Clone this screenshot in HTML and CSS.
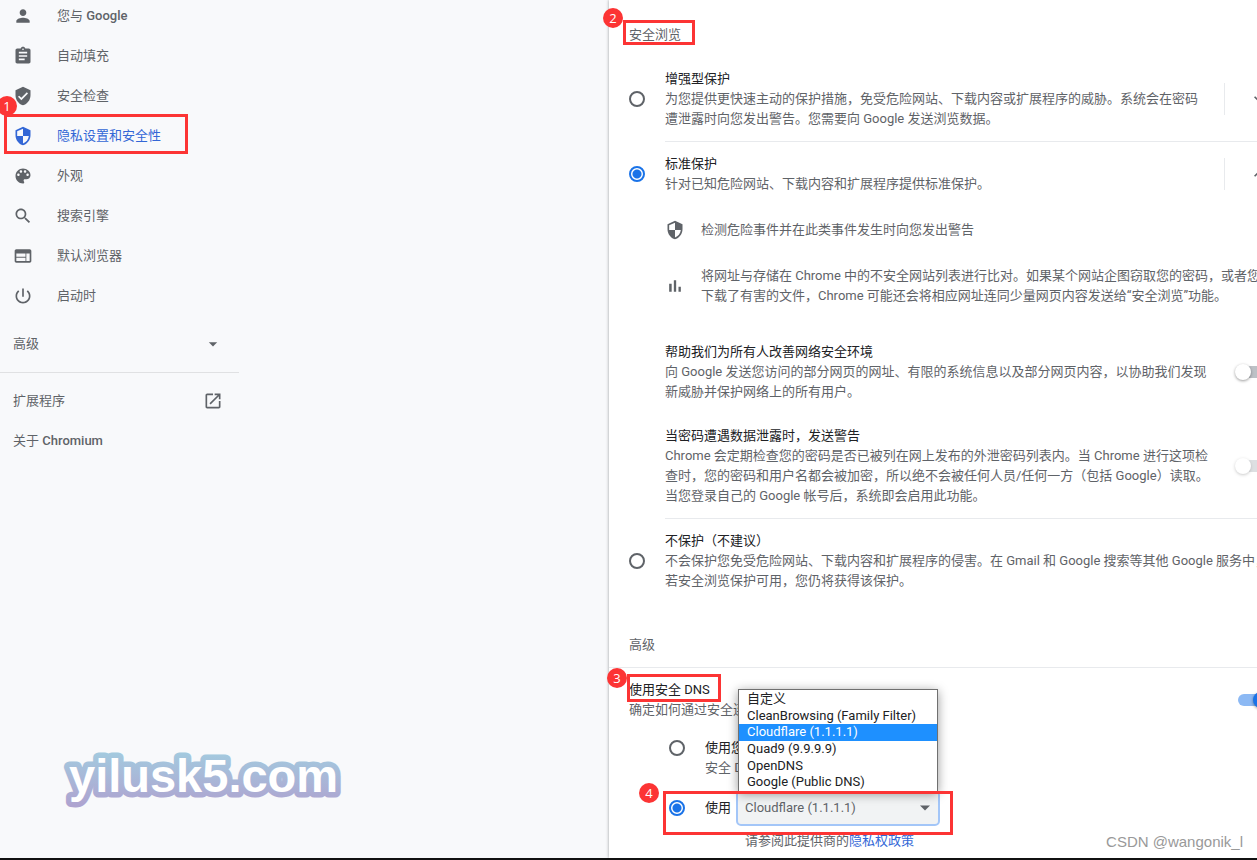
FILE: index.html
```html
<!DOCTYPE html>
<html lang="zh-CN">
<head>
    <meta charset="UTF-8">
    <meta name="viewport" content="width=device-width, initial-scale=1.0">
    <title>设置 - 隐私设置和安全性</title>
    <link rel="stylesheet" href="styles.css">
</head>
<body>
    <div class="page">
        <nav class="sidebar">
            <div class="menu">
                <a class="menu-item" href="#people">
                    <svg class="icon" viewBox="0 0 24 24"><path d="M12 12c2.21 0 4-1.79 4-4s-1.79-4-4-4-4 1.790-4 4 1.790 4 4 4zm0 2c-2.670 0-8 1.340-8 4v2h16v-2c0-2.660-5.330-4-8-4z"/></svg>
                    <span>您与 <b>Google</b></span>
                </a>
                <a class="menu-item" href="#autofill">
                    <svg class="icon" viewBox="0 0 24 24"><path d="M19 3h-4.180C14.400 1.840 13.300 1 12 1s-2.400.840-2.820 2H5c-1.100 0-2 .9-2 2v14c0 1.100.9 2 2 2h14c1.100 0 2-.9 2-2V5c0-1.100-.9-2-2-2zm-7 0c.55 0 1 .45 1 1s-.45 1-1 1-1-.45-1-1 .45-1 1-1zm2 14H7v-2h7v2zm3-4H7v-2h10v2zm0-4H7V7h10v2z"/></svg>
                    <span>自动填充</span>
                </a>
                <a class="menu-item" href="#safety">
                    <svg class="icon" viewBox="0 0 24 24"><path d="M12 1L3 5v6c0 5.550 3.840 10.740 9 12 5.160-1.260 9-6.450 9-12V5l-9-4zm-2 16l-4-4 1.410-1.410L10 14.170l6.590-6.590L18 9l-8 8z"/></svg>
                    <span>安全检查</span>
                </a>
                <a class="menu-item active" href="#privacy">
                    <svg class="icon" viewBox="0 0 24 24"><path d="M12 1L3 5v6c0 5.550 3.840 10.740 9 12 5.160-1.260 9-6.450 9-12V5l-9-4zm0 10.990h7c-.53 4.120-3.280 7.790-7 8.940V12H5V6.300l7-3.110v8.800z"/></svg>
                    <span>隐私设置和安全性</span>
                </a>
                <a class="menu-item" href="#appearance">
                    <svg class="icon" viewBox="0 0 24 24"><path d="M12 3c-4.970 0-9 4.030-9 9s4.030 9 9 9c.83 0 1.500-.67 1.500-1.500 0-.39-.15-.74-.39-1.010-.23-.26-.38-.61-.38-.99 0-.83.67-1.500 1.500-1.500H16c2.760 0 5-2.240 5-5 0-4.420-4.030-8-9-8zm-5.500 9c-.83 0-1.500-.67-1.500-1.500S5.670 9 6.500 9 8 9.670 8 10.500 7.330 12 6.500 12zm3-4C8.670 8 8 7.330 8 6.500S8.670 5 9.500 5s1.500.67 1.500 1.500S10.330 8 9.500 8zm5 0c-.83 0-1.500-.67-1.500-1.500S13.670 5 14.500 5s1.500.67 1.500 1.500S15.330 8 14.500 8zm3 4c-.83 0-1.500-.67-1.500-1.500S16.670 9 17.500 9s1.500.67 1.500 1.500-.67 1.500-1.500 1.500z"/></svg>
                    <span>外观</span>
                </a>
                <a class="menu-item" href="#search">
                    <svg class="icon" viewBox="0 0 24 24"><path d="M15.500 14h-.79l-.28-.27C15.410 12.590 16 11.110 16 9.500 16 5.910 13.090 3 9.500 3S3 5.910 3 9.500 5.910 16 9.500 16c1.610 0 3.090-.59 4.230-1.570l.27.28v.79l5 4.990L20.490 19l-4.990-5zm-6 0C7.010 14 5 11.990 5 9.500S7.010 5 9.500 5 14 7.010 14 9.500 11.990 14 9.500 14z"/></svg>
                    <span>搜索引擎</span>
                </a>
                <a class="menu-item" href="#browser">
                    <svg class="icon" viewBox="0 0 24 24"><path d="M20 4H4c-1.100 0-1.990.9-1.990 2L2 18c0 1.100.9 2 2 2h16c1.100 0 2-.9 2-2V6c0-1.100-.9-2-2-2zm-5 14H4v-4h11v4zm0-5H4V9h11v4zm5 5h-4V9h4v9z"/></svg>
                    <span>默认浏览器</span>
                </a>
                <a class="menu-item" href="#startup">
                    <svg class="icon" viewBox="0 0 24 24"><path d="M13 3h-2v10h2V3zm4.830 2.170l-1.420 1.420C17.990 7.860 19 9.810 19 12c0 3.870-3.130 7-7 7s-7-3.130-7-7c0-2.190 1.010-4.140 2.580-5.420L6.170 5.170C4.230 6.820 3 9.260 3 12c0 4.970 4.030 9 9 9s9-4.030 9-9c0-2.740-1.230-5.180-3.170-6.830z"/></svg>
                    <span>启动时</span>
                </a>
            </div>
            <button class="menu-row" type="button">
                <span>高级</span>
                <svg class="icon" viewBox="0 0 24 24"><path d="M7 10l5 5 5-5z"/></svg>
            </button>
            <div class="menu-footer">
                <a class="menu-row" href="#extensions">
                    <span>扩展程序</span>
                    <svg class="icon" viewBox="0 0 24 24"><path d="M19 19H5V5h7V3H5c-1.110 0-2 .9-2 2v14c0 1.100.89 2 2 2h14c1.100 0 2-.9 2-2v-7h-2v7zM14 3v2h3.590l-9.830 9.830 1.410 1.410L19 6.410V10h2V3h-7z"/></svg>
                </a>
                <a class="menu-row" href="#about"><span>关于 <b>Chromium</b></span></a>
            </div>
        </nav>

        <main class="card">
            <div class="card-inner">
                <h2 class="section-title">安全浏览</h2>

                <div class="option">
                    <input class="radio" type="radio" name="protection" id="enhanced">
                    <div class="option-body">
                        <div class="text">
                            <label for="enhanced">增强型保护</label>
                            <p>为您提供更快速主动的保护措施，免受危险网站、下载内容或扩展程序的威胁。系统会在密码<br>遭泄露时向您发出警告。您需要向 Google 发送浏览数据。</p>
                        </div>
                        <button class="expand" type="button" aria-label="展开">
                            <svg class="icon" viewBox="0 0 24 24"><path d="M16.590 8.590L12 13.170 7.410 8.590 6 10l6 6 6-6z"/></svg>
                        </button>
                    </div>
                </div>

                <div class="option">
                    <input class="radio" type="radio" name="protection" id="standard" checked>
                    <div class="option-body separated">
                        <div class="text">
                            <label for="standard">标准保护</label>
                            <p>针对已知危险网站、下载内容和扩展程序提供标准保护。</p>
                        </div>
                        <button class="expand" type="button" aria-label="收起">
                            <svg class="icon" viewBox="0 0 24 24"><path d="M12 8l-6 6 1.410 1.410L12 10.830l4.590 4.580L18 14z"/></svg>
                        </button>
                    </div>
                </div>

                <div class="details">
                    <div class="bullet">
                        <svg class="icon" viewBox="0 0 24 24"><path d="M12 1L3 5v6c0 5.550 3.840 10.740 9 12 5.160-1.260 9-6.450 9-12V5l-9-4zm0 10.990h7c-.53 4.120-3.280 7.790-7 8.940V12H5V6.300l7-3.110v8.800z"/></svg>
                        <p>检测危险事件并在此类事件发生时向您发出警告</p>
                    </div>
                    <div class="bullet">
                        <svg class="icon" viewBox="0 0 24 24"><path d="M5 9.200h3V19H5zM10.600 5h2.800v14h-2.800zm5.600 8H19v6h-2.800z"/></svg>
                        <p>将网址与存储在 Chrome 中的不安全网站列表进行比对。如果某个网站企图窃取您的密码，或者您<br>下载了有害的文件，Chrome 可能还会将相应网址连同少量网页内容发送给“安全浏览”功能。</p>
                    </div>
                    <div class="toggle-row">
                        <div class="text">
                            <label for="improve">帮助我们为所有人改善网络安全环境</label>
                            <p>向 Google 发送您访问的部分网页的网址、有限的系统信息以及部分网页内容，以协助我们发现<br>新威胁并保护网络上的所有用户。</p>
                        </div>
                        <input class="toggle" type="checkbox" id="improve">
                    </div>
                    <div class="toggle-row">
                        <div class="text">
                            <label for="leak">当密码遭遇数据泄露时，发送警告</label>
                            <p>Chrome 会定期检查您的密码是否已被列在网上发布的外泄密码列表内。当 Chrome 进行这项检<br>查时，您的密码和用户名都会被加密，所以绝不会被任何人员/任何一方（包括 Google）读取。<br>当您登录自己的 Google 帐号后，系统即会启用此功能。</p>
                        </div>
                        <input class="toggle" type="checkbox" id="leak" disabled>
                    </div>
                </div>

                <div class="option">
                    <input class="radio" type="radio" name="protection" id="none">
                    <div class="option-body separated">
                        <div class="text">
                            <label for="none">不保护（不建议）</label>
                            <p>不会保护您免受危险网站、下载内容和扩展程序的侵害。在 Gmail 和 Google 搜索等其他 Google 服务中，<br>若安全浏览保护可用，您仍将获得该保护。</p>
                        </div>
                    </div>
                </div>

                <h2 class="section-title advanced">高级</h2>

                <div class="dns">
                    <div class="toggle-row">
                        <div class="text">
                            <label for="dns">使用安全 DNS</label>
                            <p>确定如何通过安全连接来连接到网站</p>
                        </div>
                        <input class="toggle" type="checkbox" id="dns" checked>
                    </div>
                    <div class="dns-options">
                        <div class="dns-row">
                            <input class="radio" type="radio" name="provider" id="current">
                            <div class="text">
                                <label for="current">使用您当前的服务提供商</label>
                                <p>安全 DNS 可能并非一直可用</p>
                            </div>
                        </div>
                        <div class="dns-row">
                            <input class="radio" type="radio" name="provider" id="custom" checked>
                            <label for="custom">使用</label>
                            <div class="select-wrap">
                                <select class="select" aria-label="DNS 提供商">
                                    <option>Cloudflare (1.1.1.1)</option>
                                </select>
                                <svg class="icon arrow" viewBox="0 0 24 24"><path d="M6 9l6 6 6-6z"/></svg>
                                <ul class="popup">
                                    <li>自定义</li>
                                    <li>CleanBrowsing (Family Filter)</li>
                                    <li class="selected">Cloudflare (1.1.1.1)</li>
                                    <li>Quad9 (9.9.9.9)</li>
                                    <li>OpenDNS</li>
                                    <li>Google (Public DNS)</li>
                                </ul>
                            </div>
                        </div>
                        <p class="note">请参阅此提供商的<a href="#policy">隐私权政策</a></p>
                    </div>
                </div>
            </div>
        </main>

        <!-- step markers -->
        <div class="mark mark-1"></div>
        <div class="mark mark-2"></div>
        <div class="mark mark-3"></div>
        <div class="mark mark-4"></div>
        <span class="badge badge-1">1</span>
        <span class="badge badge-2">2</span>
        <span class="badge badge-3">3</span>
        <span class="badge badge-4">4</span>

        <svg class="site-mark" width="300" height="70" viewBox="0 0 300 70">
            <defs>
                <linearGradient id="fade" gradientUnits="userSpaceOnUse" x1="0" y1="6" x2="0" y2="60">
                    <stop offset="0" stop-color="#a3cbdf"/>
                    <stop offset="1" stop-color="#aea4d0"/>
                </linearGradient>
            </defs>
            <text x="13" y="47">yilusk5.com</text>
        </svg>
        <span class="credit">CSDN @wangonik_l</span>
    </div>
</body>
</html>
```

FILE: styles.css
```css
* {
    box-sizing: border-box;
}
body {
    margin: 0;
    font-family: Roboto, "Noto Sans CJK SC", sans-serif;
    font-size: 13px;
    line-height: 20px;
    color: #5f6368;
    background-color: #f8f9fb;
}
p, h2, ul {
    margin: 0;
    padding: 0;
}
a {
    color: #3367d6;
    text-decoration: none;
}
b {
    font-weight: 500;
}
.page {
    position: relative;
    display: flex;
    height: 100vh;
    overflow: hidden;
    border-bottom: 2px solid #111;
}
.icon {
    width: 20px;
    height: 20px;
    flex: none;
    fill: #5f6368;
}

/* sidebar */
.sidebar {
    flex: 0 0 609px;
}
.menu {
    margin-top: -4px;
    margin-bottom: 8px;
}
.menu-item {
    display: flex;
    align-items: center;
    gap: 24px;
    height: 40px;
    padding-left: 13px;
    color: #5f6368;
}
.menu-item.active {
    color: #3367d6;
}
.menu-item.active .icon {
    fill: #3367d6;
}
.menu-row {
    display: flex;
    align-items: center;
    justify-content: space-between;
    width: 239px;
    height: 40px;
    padding: 0 16px 0 13px;
    border: 0;
    background: none;
    font: inherit;
    color: #5f6368;
}
.menu-footer {
    width: 239px;
    margin-top: 8px;
    padding-top: 8px;
    border-top: 1px solid #e0e1e3;
}

/* settings card */
.card {
    flex: 1;
    min-width: 0;
    overflow: hidden;
    background-color: #fff;
    box-shadow: 0 0 3px rgba(60, 64, 67, 0.5);
}
.card-inner {
    min-width: 680px;
    white-space: nowrap;
}
.section-title {
    padding: 25px 20px 12px;
    font-size: 13px;
    font-weight: 400;
}
.section-title.advanced {
    padding: 32px 20px 12px;
}
.text {
    flex: 1;
}
label {
    display: block;
    color: #202124;
}
.option {
    display: flex;
    align-items: center;
    gap: 20px;
    padding-left: 20px;
}
.option-body {
    display: flex;
    align-items: center;
    flex: 1;
    padding: 12px 20px 12px 0;
}
.option-body.separated {
    border-top: 1px solid #e8eaed;
}
.expand {
    display: flex;
    align-items: center;
    height: 32px;
    padding: 0 0 0 24px;
    border: 0;
    border-left: 1px solid #e8eaed;
    background: none;
}
.details {
    padding: 14px 20px 12px 56px;
}
.bullet {
    display: flex;
    align-items: center;
    gap: 16px;
    margin-bottom: 26px;
}
.toggle-row {
    display: flex;
    align-items: center;
}
.details .toggle-row {
    padding-top: 10px;
    margin-bottom: 14px;
}
.details .toggle-row:last-child {
    margin-bottom: 0;
}
.radio {
    appearance: none;
    flex: none;
    width: 16px;
    height: 16px;
    margin: 0;
    border: 2px solid #5f6368;
    border-radius: 50%;
}
.radio:checked {
    border-color: #1a73e8;
    background: radial-gradient(circle, #1a73e8 4px, transparent 5px);
}
.toggle {
    appearance: none;
    position: relative;
    flex: none;
    width: 28px;
    height: 12px;
    margin: 0 3px;
    border-radius: 6px;
    background-color: #bdc1c6;
}
.toggle::before {
    content: "";
    position: absolute;
    top: -2px;
    left: -3px;
    width: 16px;
    height: 16px;
    border-radius: 50%;
    background-color: #fff;
    box-shadow: 0 1px 3px rgba(0, 0, 0, 0.4);
}
.toggle:disabled {
    opacity: 0.5;
}
.toggle:checked {
    background-color: #8cb9f4;
}
.toggle:checked::before {
    left: 15px;
    background-color: #1a73e8;
}

/* secure dns */
.dns {
    padding: 12px 20px;
    border-top: 1px solid #e8eaed;
}
.dns-options {
    padding: 18px 40px 0;
}
.dns-row {
    display: flex;
    align-items: center;
    min-height: 40px;
}
.dns-row .radio {
    margin-right: 20px;
}
.dns-row:first-child {
    align-items: flex-start;
    margin-bottom: 12px;
}
.dns-row:first-child .radio {
    margin-top: 2px;
}
.dns-row:nth-child(2) {
    min-height: 36px;
}
.select-wrap {
    position: relative;
    width: 204px;
    margin-left: 5px;
}
.select {
    appearance: none;
    display: block;
    width: 100%;
    height: 36px;
    padding: 0 7px;
    border: 2px solid #a3c6f8;
    border-radius: 5px;
    background-color: #f1f3f4;
    font: inherit;
    color: #5f6368;
}
.arrow {
    position: absolute;
    top: 8px;
    right: 5px;
    pointer-events: none;
}
.popup {
    position: absolute;
    left: 2px;
    bottom: 34px;
    display: flex;
    flex-direction: column;
    width: 200px;
    height: 103px;
    padding-top: 1px;
    border: 1px solid #707070;
    background-color: #fff;
    box-shadow: 0 2px 10px rgba(0, 0, 0, 0.4);
    list-style: none;
    line-height: 16px;
    color: #202124;
}
.popup li {
    flex: 1;
    padding-left: 8px;
}
.popup .selected {
    background-color: #1e90ff;
    color: #fff;
}
.note {
    padding: 5px 0 0 76px;
}

/* step markers */
.mark {
    position: absolute;
    border: 3px solid #fc3434;
}
.mark-1 {
    left: 4px;
    top: 114px;
    width: 184px;
    height: 40px;
}
.mark-2 {
    left: 623px;
    top: 20px;
    width: 72px;
    height: 25px;
}
.mark-3 {
    left: 627px;
    top: 674px;
    width: 94px;
    height: 28px;
}
.mark-4 {
    left: 663px;
    top: 791px;
    width: 290px;
    height: 44px;
}
.badge {
    position: absolute;
    width: 20px;
    height: 20px;
    border-radius: 50%;
    background-color: #fc3434;
    font-family: "Open Sans", sans-serif;
    color: #fff;
    text-align: center;
}
.badge-1 {
    left: -3px;
    top: 96px;
}
.badge-2 {
    left: 603px;
    top: 8px;
}
.badge-3 {
    left: 607px;
    top: 668px;
}
.badge-4 {
    left: 639px;
    top: 783px;
}
.site-mark {
    position: absolute;
    left: 56px;
    top: 745px;
}
.site-mark text {
    font-family: "Liberation Sans", sans-serif;
    font-size: 47px;
    font-weight: 700;
    fill: #fff;
    stroke: url(#fade);
    stroke-width: 11px;
    stroke-linejoin: round;
    paint-order: stroke;
}
.credit {
    position: absolute;
    right: 14px;
    bottom: 6px;
    font-family: "Liberation Sans", sans-serif;
    font-size: 15px;
    color: #999;
}
```
